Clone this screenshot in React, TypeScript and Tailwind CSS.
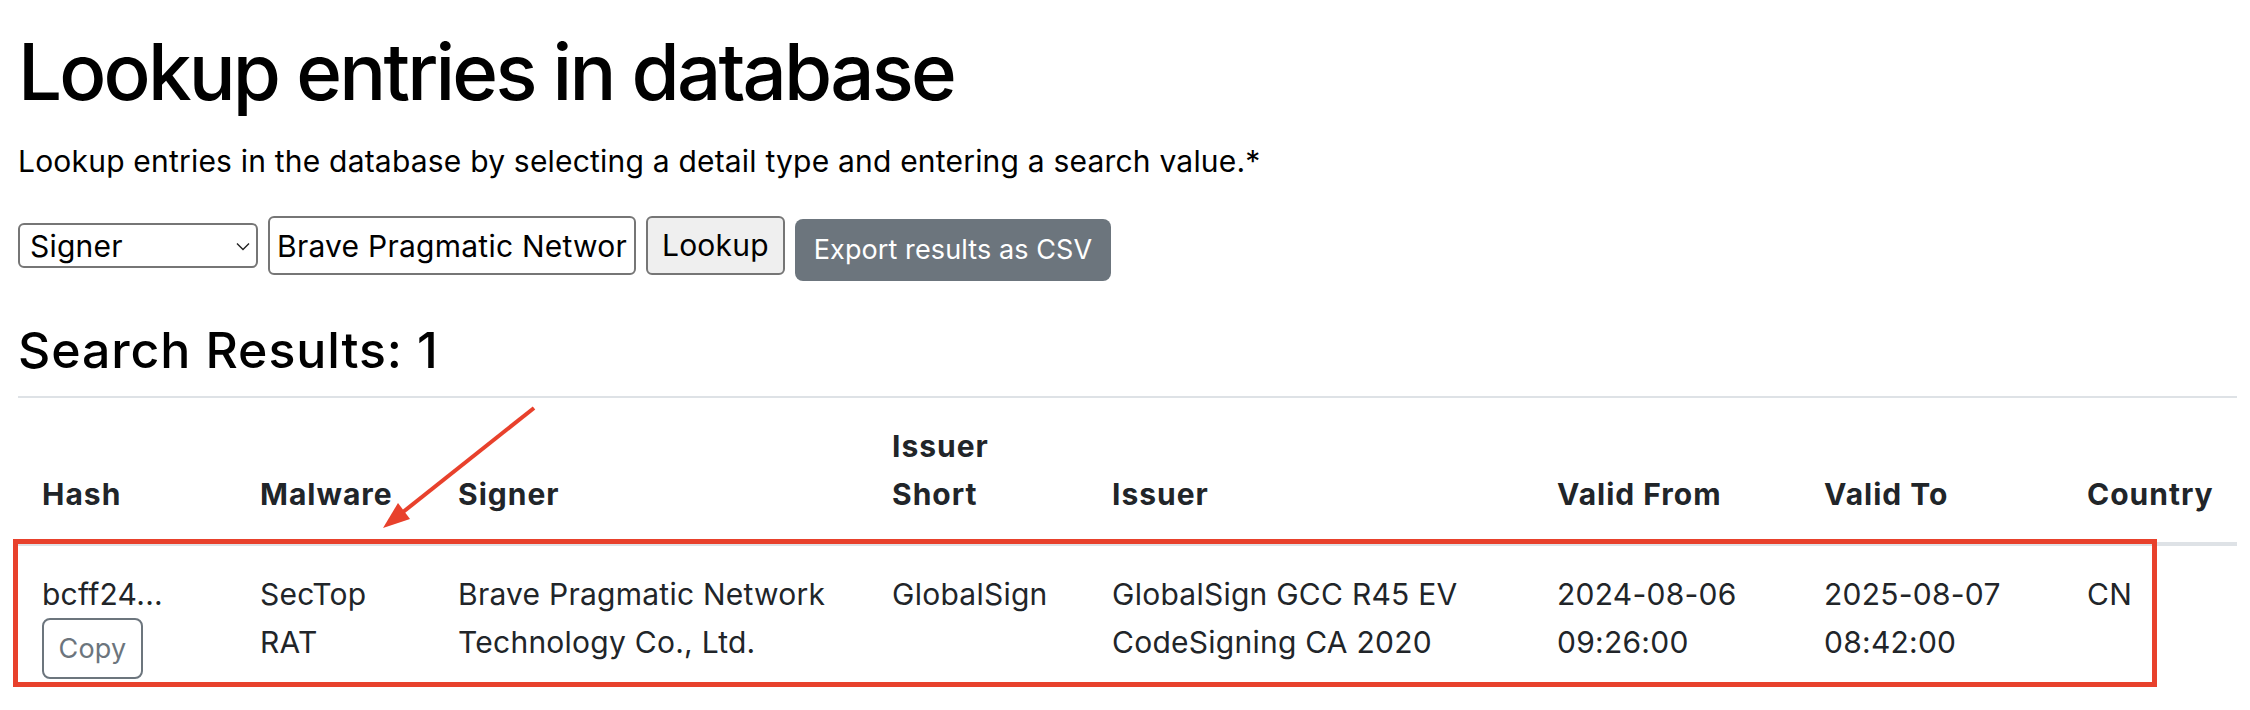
import React from 'react';

const rows = [
    {
        hash: 'bcff24...',
        malware: 'SecTop RAT',
        signer: 'Brave Pragmatic Network Technology Co., Ltd.',
        issuerShort: 'GlobalSign',
        issuer: 'GlobalSign GCC R45 EV CodeSigning CA 2020',
        validFrom: '2024-08-06 09:26:00',
        validTo: '2025-08-07 08:42:00',
        country: 'CN',
    },
];

const App: React.FC = () => {
    return (
        <div className="relative w-full min-h-[710px] bg-white font-['Inter',sans-serif] text-black pl-[18px] pr-[13px]">
            <h1 className="pt-[24px] text-[78px] leading-[96px] font-medium tracking-[-2.8px]">Lookup entries in database</h1>
            <p className="mt-[19px] text-[30px] leading-[45px] tracking-[0.2px]">
                Lookup entries in the database by selecting a detail type and entering a search value.*
            </p>

            <div className="mt-[32px] flex items-start gap-[10px]">
                <div className="relative mt-[7px]">
                    <select
                        defaultValue="Signer"
                        className="appearance-none w-[240px] h-[45px] border-2 border-[#767676] rounded-[6px] bg-white pl-[10px] text-[30px] leading-[40px] tracking-[0.2px] outline-none"
                    >
                        <option>Signer</option>
                        <option>Hash</option>
                        <option>Malware</option>
                        <option>Issuer</option>
                    </select>
                    <svg className="pointer-events-none absolute right-[8px] top-[19px]" width="14" height="9" viewBox="0 0 14 9">
                        <path d="M1 1.5 L7 7.5 L13 1.5" fill="none" stroke="#222" strokeWidth="1.4" />
                    </svg>
                </div>
                <input
                    readOnly
                    value="Brave Pragmatic Network Technology Co., Ltd."
                    className="w-[368px] h-[59px] border-2 border-[#767676] rounded-[6px] bg-white px-[7px] text-[30px] tracking-[0.25px] outline-none"
                />
                <button className="h-[59px] px-[14px] border-2 border-[#767676] rounded-[6px] bg-[#efefef] text-[30px] tracking-[0.2px]">Lookup</button>
                <button className="mt-[3px] h-[62px] px-[19px] rounded-[8px] bg-[#6c757d] text-white text-[27px] tracking-[0.1px]">Export results as CSV</button>
            </div>

            <h2 className="mt-[40px] mb-[17px] text-[50px] leading-[58px] font-medium tracking-[0.9px]">Search Results: 1</h2>

            <table className="w-[2219px] table-fixed border-t-2 border-[#dee2e6] text-[#212529] text-[30px] leading-[48px] tracking-[0.25px]">
                <thead>
                    <tr className="border-b-4 border-[#dee2e6] tracking-[1px]">
                        <th className="w-[218px] p-[24px] text-left align-bottom font-bold">Hash</th>
                        <th className="w-[198px] p-[24px] text-left align-bottom font-bold">Malware</th>
                        <th className="w-[434px] p-[24px] text-left align-bottom font-bold">Signer</th>
                        <th className="w-[220px] p-[24px] text-left align-bottom font-bold">Issuer Short</th>
                        <th className="w-[445px] p-[24px] text-left align-bottom font-bold">Issuer</th>
                        <th className="w-[267px] p-[24px] text-left align-bottom font-bold">Valid From</th>
                        <th className="w-[263px] p-[24px] text-left align-bottom font-bold">Valid To</th>
                        <th className="w-[174px] p-[24px] text-left align-bottom font-bold">Country</th>
                    </tr>
                </thead>
                <tbody>
                    {rows.map((r) => (
                        <tr key={r.hash}>
                            <td className="p-[24px] align-top">
                                <div>{r.hash}</div>
                                <button className="h-[61px] w-[101px] border-2 border-[#6c757d] rounded-[8px] text-[#6c757d] text-[27px]">Copy</button>
                            </td>
                            <td className="p-[24px] align-top">{r.malware}</td>
                            <td className="p-[24px] align-top">{r.signer}</td>
                            <td className="p-[24px] align-top">{r.issuerShort}</td>
                            <td className="p-[24px] align-top">{r.issuer}</td>
                            <td className="p-[24px] align-top">{r.validFrom}</td>
                            <td className="p-[24px] align-top">{r.validTo}</td>
                            <td className="p-[24px] align-top">{r.country}</td>
                        </tr>
                    ))}
                </tbody>
            </table>

            {/* annotation: red highlight box + arrow */}
            <div className="pointer-events-none absolute left-[13px] top-[539px] w-[2144px] h-[148px] border-[5px] border-[#e8412c]" />
            <svg className="pointer-events-none absolute left-0 top-0" width="2250" height="710">
                <line x1="534" y1="408" x2="398" y2="516" stroke="#e8412c" strokeWidth="4" />
                <polygon points="383,528 398,503 410,519" fill="#e8412c" />
            </svg>
        </div>
    );
};

export default App;
